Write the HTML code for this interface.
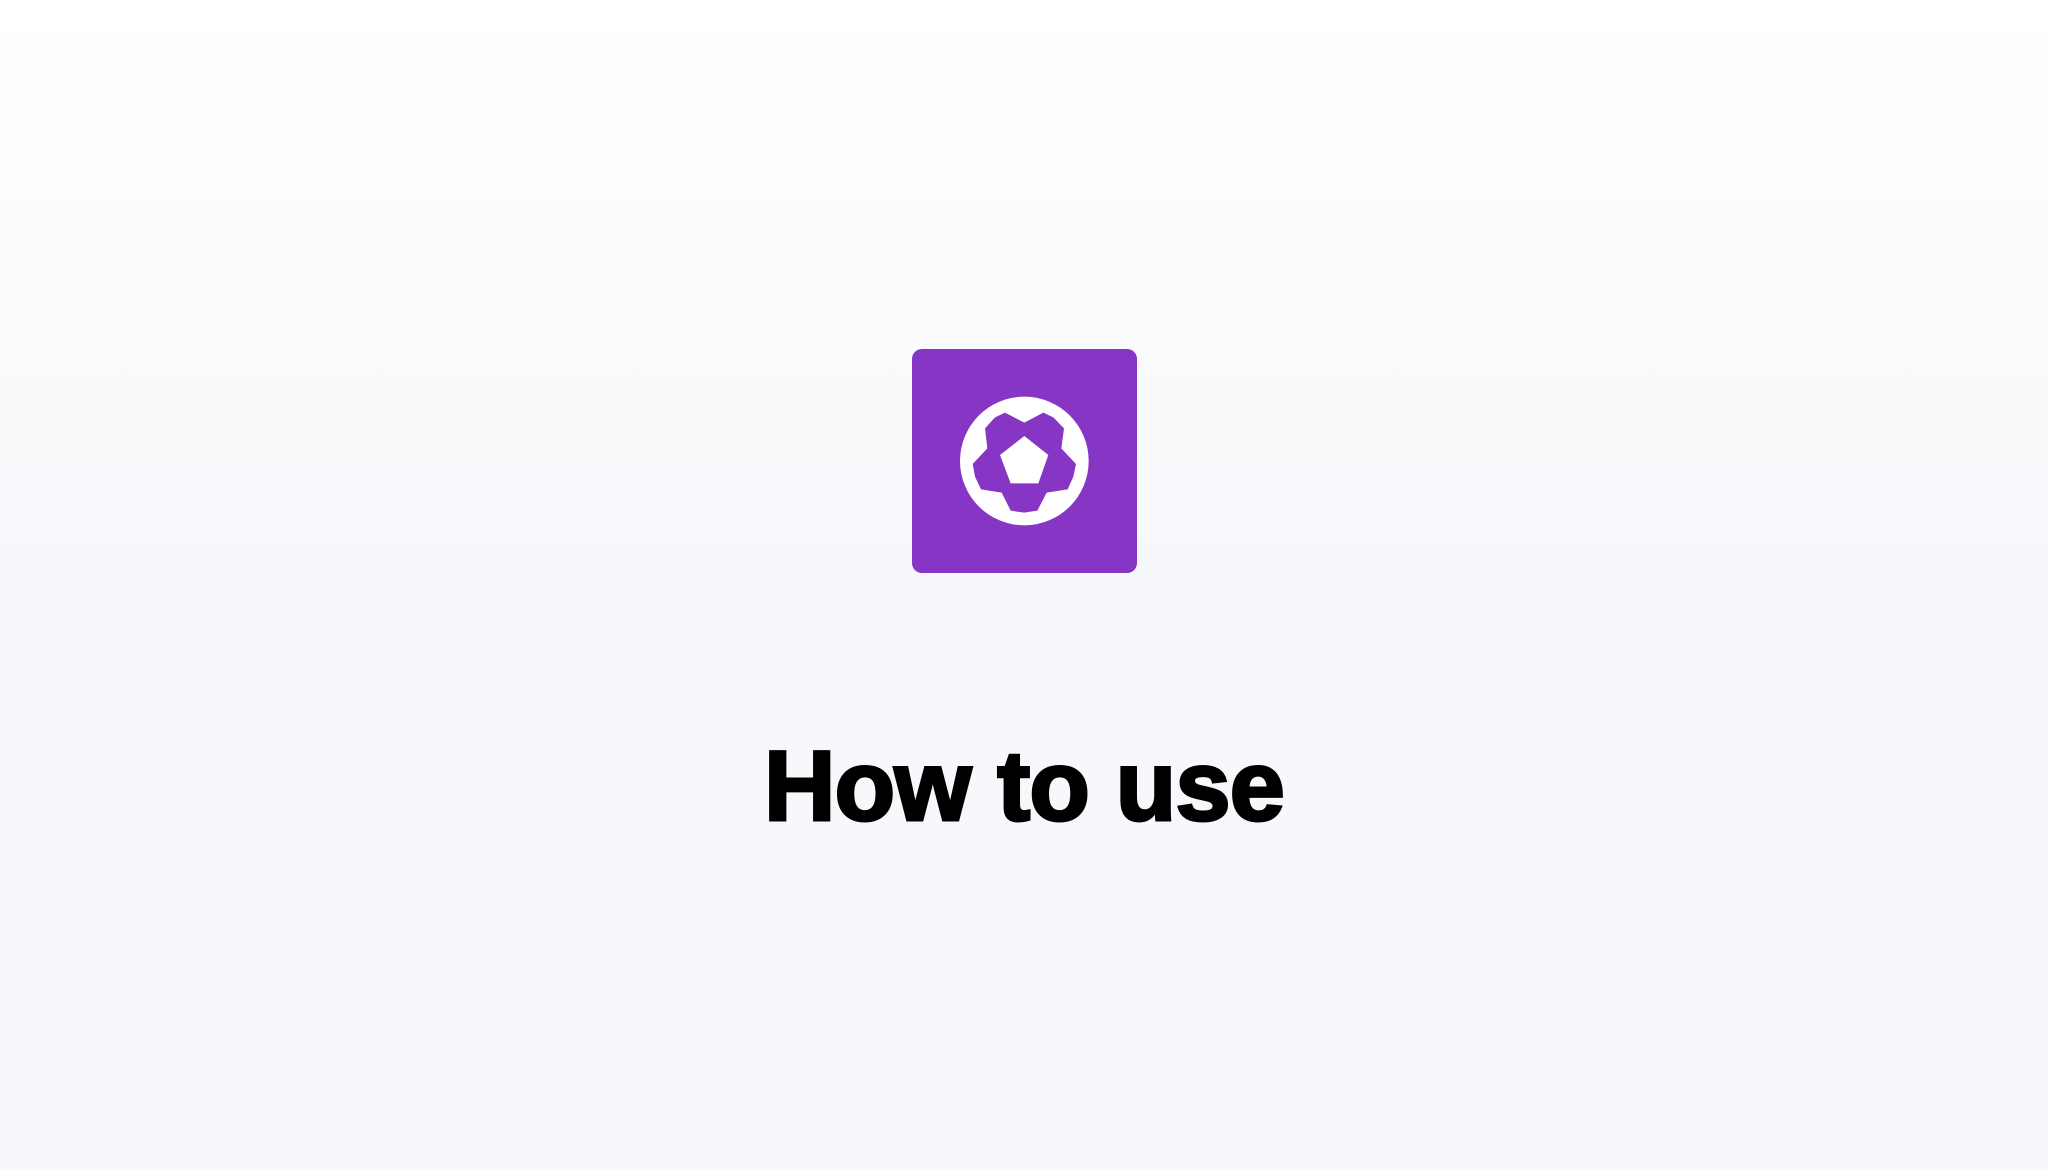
<!DOCTYPE html>
<html><head><meta charset="utf-8"><style>
html,body{margin:0;width:2048px;height:1170px;overflow:hidden;background:linear-gradient(#ffffff,#f6f8fb 50%,#f6f8fb);}
.box{position:absolute;left:912px;top:349px;width:225px;height:224px;background:#8635c5;border-radius:10px;}
svg{position:absolute;left:900px;top:340px;}
h1{position:absolute;left:0;width:2048px;top:729px;margin:0;text-align:center;font:bold 99px "Liberation Sans",sans-serif;color:#000;letter-spacing:-0.8px;-webkit-text-stroke:3px #000;}
</style></head><body>
<div class="box"></div>
<svg width="250" height="250" viewBox="0 0 750 750">
<circle cx="373" cy="363" r="193" fill="#fff"/>
<polygon fill="#8635c5" points="315,218 373,248 430,218 460,232 492,265 484,325 528,372 520,410 503,448 440,458 412,512 373,518 332,512 305,458 243,448 225,410 218,372 262,325 255,265 285,232"/>
<polygon fill="#fff" points="373,288 445,345 415,430 332,430 300,345"/>
</svg>
<h1>How to use</h1>
</body></html>
